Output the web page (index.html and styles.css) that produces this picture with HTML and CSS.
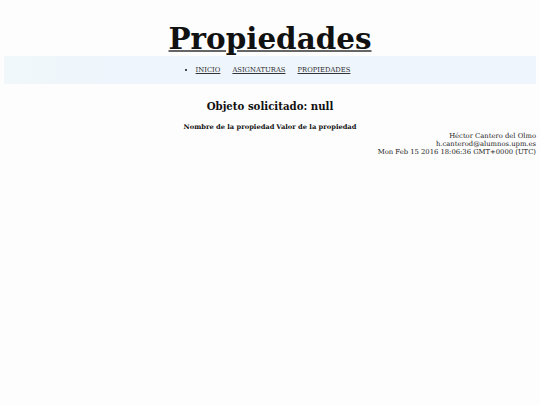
FILE: index.html
```html
<!DOCTYPE html>
<html>
<head>
<meta charset="utf-8">
<link rel="stylesheet" href="styles.css">
</head>
<body>
<header class="top">
  <h1 class="title">Propiedades</h1>
</header>
<nav class="nav">
  <ul class="menu">
    <li class="menu-item"><a href="#">INICIO</a></li>
    <li class="menu-item"><a href="#">ASIGNATURAS</a></li>
    <li class="menu-item"><a href="#">PROPIEDADES</a></li>
  </ul>
</nav>
<main class="content">
  <h2 class="object">Objeto solicitado: null</h2>
  <table class="props">
    <tr><th>Nombre de la propiedad</th><th>Valor de la propiedad</th></tr>
  </table>
</main>
<footer class="foot">
  <div>Héctor Cantero del Olmo</div>
  <div>h.canterod@alumnos.upm.es</div>
  <div>Mon Feb 15 2016 18:06:36 GMT+0000 (UTC)</div>
</footer>
</body>
</html>
```
FILE: styles.css
```css
html, body {
  background: #fdfdfd;
}
body {
  margin: 0;
  padding: 0 4px;
  font-family: "DejaVu Serif", serif;
  color: #111;
}
.top {
  padding-top: 21px;
  text-align: center;
}
.title {
  margin: 0;
  font-size: 29.4px;
  line-height: 35px;
  font-weight: bold;
  text-decoration: underline;
  text-decoration-color: #666;
  text-underline-offset: 1px;
}
.nav {
  height: 28px;
  background: linear-gradient(to right, #f0f8fa, #eef5fc 20%, #eef5fc);
  display: flex;
  align-items: center;
  justify-content: center;
}
.menu {
  margin: 0;
  padding: 0 0 0 6px;
  display: flex;
  gap: 12px;
  font-size: 6.8px;
}
.menu-item {
  list-style: none;
}
.menu-item:first-child {
  list-style: disc;
}
.menu-item a {
  color: #333;
}
.content {
  text-align: center;
  padding-top: 15px;
}
.object {
  margin: 0;
  font-size: 10.2px;
  line-height: 14px;
}
.props {
  margin: 9px auto 0;
  font-size: 6.7px;
  border-spacing: 0;
}
.props th {
  padding: 1px;
}
.foot {
  text-align: right;
  font-size: 6.8px;
  line-height: 8px;
  color: #222;
}
```
